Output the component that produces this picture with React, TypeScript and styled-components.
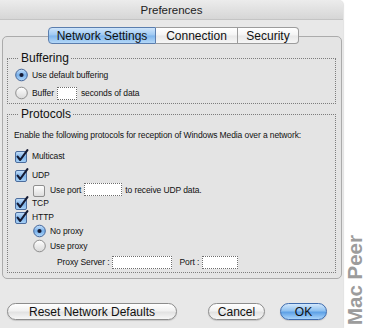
import React from "react";
import styled, { createGlobalStyle } from "styled-components";

const Global = createGlobalStyle`
  html, body { margin: 0; padding: 0; background: #ffffff; }
  body { font-family: "Liberation Sans", Arial, sans-serif; }
  * { box-sizing: border-box; }
`;

const Page = styled.div`
  width: 368px;
  height: 328px;
  display: flex;
  overflow: hidden;
  background: #ffffff;
`;

const Window = styled.div`
  width: 343px;
  height: 328px;
  display: flex;
  flex-direction: column;
  background: #e8e8e8;
  border-top-right-radius: 5px;
  box-shadow: 1px 0 1px rgba(0, 0, 0, 0.12);
`;

const TitleBar = styled.div`
  height: 20px;
  display: flex;
  align-items: center;
  justify-content: center;
  font-size: 11.5px;
  color: #222;
  background: linear-gradient(#ececec, #d6d6d6);
  border-top-right-radius: 5px;
  border-bottom: 1px solid #c4c4c4;
`;

const Body = styled.div`
  display: flex;
  flex-direction: column;
  padding: 7px 1px 0 2px;
`;

const TabBar = styled.div`
  display: flex;
  justify-content: center;
  margin-bottom: -8px;
  position: relative;
  z-index: 1;
  padding-left: 3px;
`;

const Tab = styled.div<{ $active?: boolean; $w: number; $first?: boolean; $last?: boolean }>`
  width: ${(p) => p.$w}px;
  height: 17px;
  display: flex;
  align-items: center;
  justify-content: center;
  font-size: 12px;
  color: #111;
  border: 1px solid ${(p) => (p.$active ? "#5b7eae" : "#9c9c9c")};
  border-left: ${(p) => (p.$first ? undefined : "none")};
  border-radius: ${(p) => (p.$first ? "4px 0 0 4px" : p.$last ? "0 4px 4px 0" : "0")};
  background: ${(p) =>
    p.$active
      ? "linear-gradient(#cfe5fb 0%, #9cc8f2 48%, #7eb5ec 52%, #b4d8f8 100%)"
      : "linear-gradient(#ffffff 0%, #f4f4f4 48%, #e8e8e8 52%, #f6f6f6 100%)"};
`;

const Panel = styled.div`
  border: 1px solid #ababab;
  border-radius: 5px;
  background: #e4e4e4;
  padding: 14px 0 5px 0;
  display: flex;
  flex-direction: column;
`;

const Group = styled.fieldset<{ $top?: number }>`
  margin: ${(p) => p.$top ?? 0}px 5px 0 4px;
  padding: 2px 7px 3px 7px;
  border: 1px dotted #7d7d7d;
  min-width: 0;
  display: flex;
  flex-direction: column;
`;

const Legend = styled.legend`
  font-size: 12px;
  line-height: 14px;
  color: #111;
  padding: 0 2px;
  margin-left: 4px;
`;

const Row = styled.div<{ $top?: number; $indent?: number; $h?: number }>`
  display: flex;
  align-items: center;
  height: ${(p) => p.$h ?? 13}px;
  margin-top: ${(p) => p.$top ?? 0}px;
  padding-left: ${(p) => p.$indent ?? 0}px;
`;

const Small = styled.span<{ $ml?: number }>`
  font-size: 8.5px;
  letter-spacing: -0.1px;
  color: #111;
  margin-left: ${(p) => p.$ml ?? 0}px;
  white-space: nowrap;
`;

const Intro = styled.div`
  font-size: 8.5px;
  letter-spacing: -0.1px;
  line-height: 11px;
  color: #111;
  margin-top: 7px;
  margin-left: -1px;
  white-space: nowrap;
`;

const Field = styled.div<{ $w: number; $ml?: number }>`
  width: ${(p) => p.$w}px;
  height: 13px;
  margin-left: ${(p) => p.$ml ?? 0}px;
  background: #ffffff;
  border: 1px dotted #6d6d6d;
  flex: none;
`;

const Footer = styled.div`
  display: flex;
  align-items: center;
  margin-top: 24px;
  padding: 0 15px 0 5px;
`;

const Spacer = styled.div`
  flex: 1;
`;

const Button = styled.div<{ $w: number; $primary?: boolean; $ml?: number }>`
  width: ${(p) => p.$w}px;
  height: 17px;
  margin-left: ${(p) => p.$ml ?? 0}px;
  border-radius: 9px;
  display: flex;
  align-items: center;
  justify-content: center;
  font-size: 12px;
  color: #111;
  border: 1px solid ${(p) => (p.$primary ? "#3f6cae" : "#8c8c8c")};
  background: ${(p) =>
    p.$primary
      ? "linear-gradient(#d3e8fc 0%, #8fc1f0 45%, #5ea1e6 55%, #a9d4fb 100%)"
      : "linear-gradient(#ffffff 0%, #f1f1f1 45%, #e2e2e2 55%, #f7f7f7 100%)"};
  box-shadow: 0 1px 1px rgba(0, 0, 0, 0.15);
`;

const Strip = styled.div`
  flex: 1;
  display: flex;
  flex-direction: column;
  justify-content: flex-end;
  align-items: center;
  padding-bottom: 3px;
`;

const Watermark = styled.div`
  writing-mode: vertical-rl;
  transform: rotate(180deg);
  font-family: "Liberation Sans", Arial, sans-serif;
  font-weight: bold;
  font-size: 20.5px;
  line-height: 20px;
  color: #9c9c9c;
  margin-right: 2px;
`;

const IconBox = styled.span<{ $ml?: number }>`
  display: inline-flex;
  width: 14px;
  height: 14px;
  margin-left: ${(p) => p.$ml ?? 0}px;
  flex: none;
`;

function Check({ on, ml }: { on?: boolean; ml?: number }) {
  return (
    <IconBox $ml={ml}>
      <svg width="14" height="14" viewBox="0 0 14 14">
        <defs>
          <linearGradient id="cbOn" x1="0" y1="0" x2="0" y2="1">
            <stop offset="0" stopColor="#c6e0fa" />
            <stop offset="0.5" stopColor="#7fb4ea" />
            <stop offset="1" stopColor="#a9d2f7" />
          </linearGradient>
          <linearGradient id="cbOff" x1="0" y1="0" x2="0" y2="1">
            <stop offset="0" stopColor="#ffffff" />
            <stop offset="1" stopColor="#dcdcdc" />
          </linearGradient>
        </defs>
        <rect
          x="0.5"
          y="2.5"
          width="11"
          height="11"
          rx="1.5"
          fill={on ? "url(#cbOn)" : "url(#cbOff)"}
          stroke={on ? "#4c6c9c" : "#8e8e8e"}
        />
        {on && (
          <path d="M2.6 7.6 L5.2 11 L12.4 1.2" fill="none" stroke="#141a33" strokeWidth="2.1" strokeLinecap="round" strokeLinejoin="round" />
        )}
      </svg>
    </IconBox>
  );
}

function Radio({ on, ml }: { on?: boolean; ml?: number }) {
  return (
    <IconBox $ml={ml}>
      <svg width="14" height="14" viewBox="0 0 14 14">
        <defs>
          <linearGradient id="rbOn" x1="0" y1="0" x2="0" y2="1">
            <stop offset="0" stopColor="#c8e2fb" />
            <stop offset="0.5" stopColor="#78b0ea" />
            <stop offset="1" stopColor="#b2d8fa" />
          </linearGradient>
          <linearGradient id="rbOff" x1="0" y1="0" x2="0" y2="1">
            <stop offset="0" stopColor="#ffffff" />
            <stop offset="1" stopColor="#d8d8d8" />
          </linearGradient>
        </defs>
        <circle cx="6.5" cy="7" r="5.8" fill={on ? "url(#rbOn)" : "url(#rbOff)"} stroke={on ? "#46679a" : "#8e8e8e"} />
        {on && <circle cx="6.5" cy="7" r="2.1" fill="#141a33" />}
      </svg>
    </IconBox>
  );
}

export default function App() {
  return (
    <>
      <Global />
      <Page>
        <Window>
          <TitleBar>Preferences</TitleBar>
          <Body>
            <TabBar>
              <Tab $active $first $w={108}>Network Settings</Tab>
              <Tab $w={82}>Connection</Tab>
              <Tab $last $w={61}>Security</Tab>
            </TabBar>
            <Panel>
              <Group>
                <Legend>Buffering</Legend>
                <Row $h={14} $top={1}>
                  <Radio on />
                  <Small $ml={3}>Use default buffering</Small>
                </Row>
                <Row $h={14} $top={4}>
                  <Radio />
                  <Small $ml={3}>Buffer</Small>
                  <Field $w={20} $ml={3} />
                  <Small $ml={4}>seconds of data</Small>
                </Row>
              </Group>
              <Group $top={3}>
                <Legend>Protocols</Legend>
                <Intro>Enable the following protocols for reception of Windows Media over a network:</Intro>
                <Row $top={8}>
                  <Check on />
                  <Small $ml={3}>Multicast</Small>
                </Row>
                <Row $top={6}>
                  <Check on />
                  <Small $ml={3}>UDP</Small>
                </Row>
                <Row $top={2} $indent={18}>
                  <Check />
                  <Small $ml={3}>Use port</Small>
                  <Field $w={38} $ml={3} />
                  <Small $ml={3}>to receive UDP data.</Small>
                </Row>
                <Row $top={0}>
                  <Check on />
                  <Small $ml={3}>TCP</Small>
                </Row>
                <Row $top={1}>
                  <Check on />
                  <Small $ml={3}>HTTP</Small>
                </Row>
                <Row $top={1} $indent={18}>
                  <Radio on />
                  <Small $ml={3}>No proxy</Small>
                </Row>
                <Row $top={2} $indent={18}>
                  <Radio />
                  <Small $ml={3}>Use proxy</Small>
                </Row>
                <Row $top={3} $indent={42} $h={14}>
                  <Small>Proxy Server :</Small>
                  <Field $w={60} $ml={3} />
                  <Small $ml={7}>Port :</Small>
                  <Field $w={36} $ml={3} />
                </Row>
              </Group>
            </Panel>
            <Footer>
              <Button $w={170}>Reset Network Defaults</Button>
              <Spacer />
              <Button $w={57}>Cancel</Button>
              <Button $w={47} $ml={15} $primary>OK</Button>
            </Footer>
          </Body>
        </Window>
        <Strip>
          <Watermark>Mac Peer</Watermark>
        </Strip>
      </Page>
    </>
  );
}
